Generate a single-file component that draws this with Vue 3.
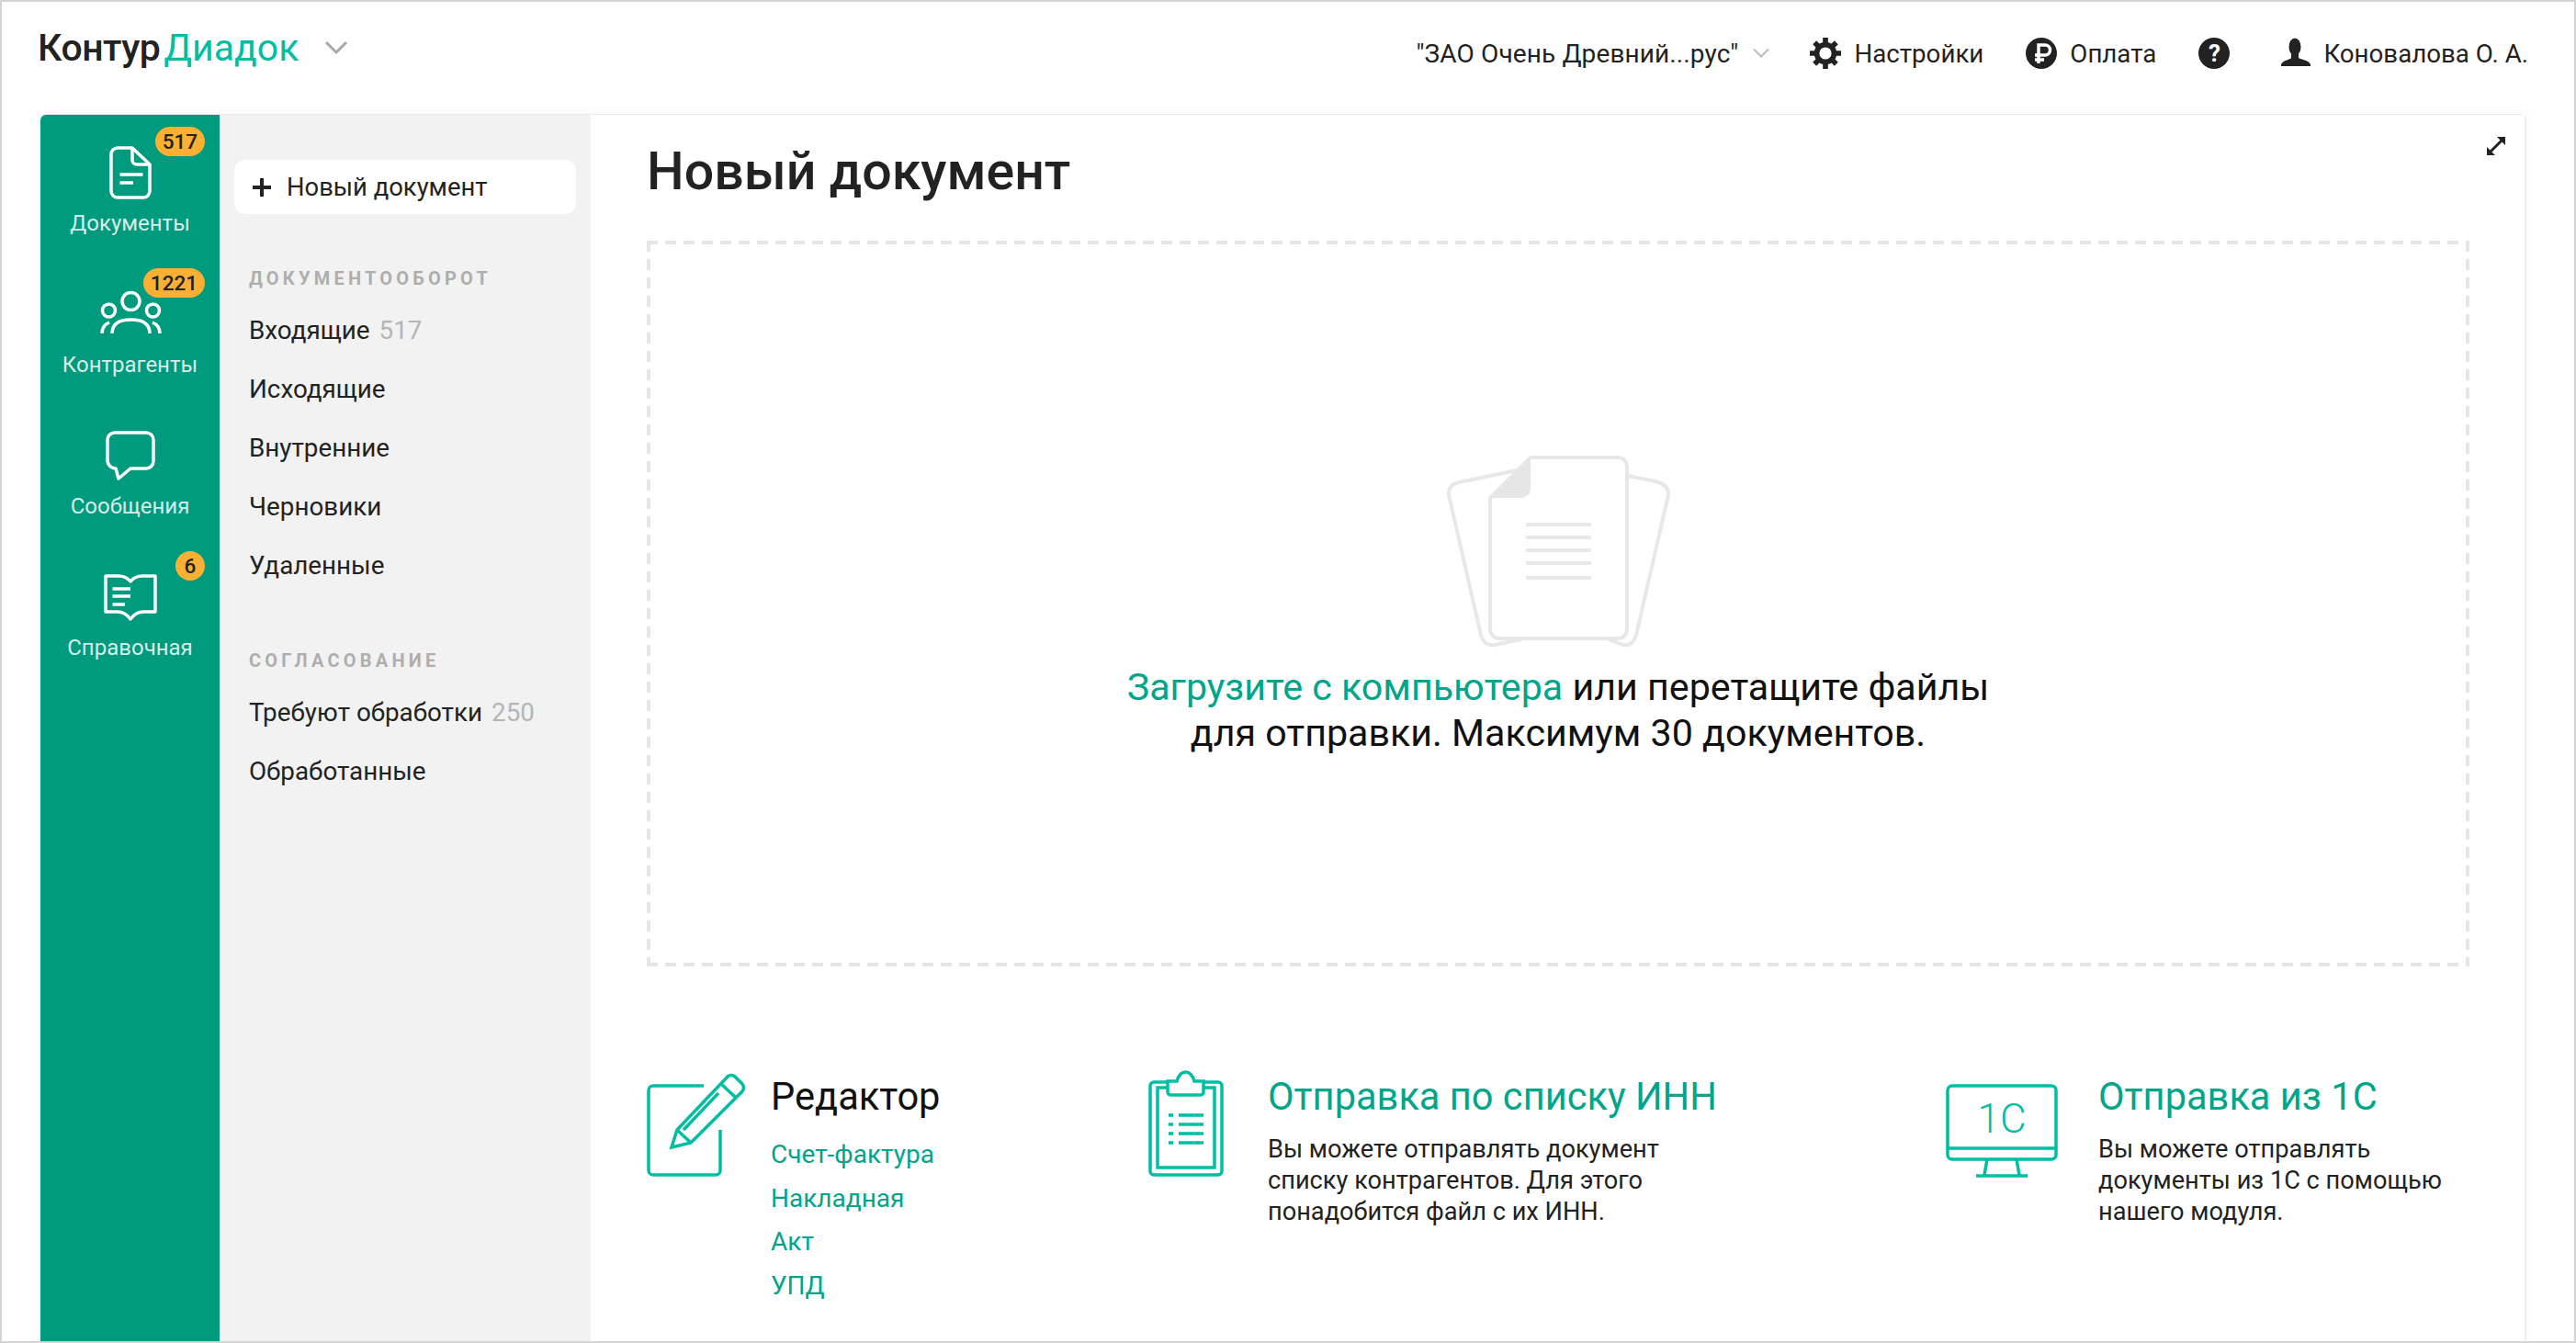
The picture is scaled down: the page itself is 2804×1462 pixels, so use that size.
<template>
  <div class="page">
    <header class="topbar">
      <div class="logo">
        <span class="logo-kontur">Контур</span><span class="logo-product">Диадок</span>
        <svg class="logo-arrow" width="26" height="16" viewBox="0 0 26 16"><path d="M2 2l11 11L24 2" fill="none" stroke="#a8a8a8" stroke-width="3" /></svg>
      </div>
      <nav class="top-menu">
        <span class="top-item company">
          "ЗАО Очень Древний...рус"
          <svg width="18" height="12" viewBox="0 0 18 12"><path d="M1 1.500l8 8 8-8" fill="none" stroke="#bbb" stroke-width="2" /></svg>
        </span>
        <span class="top-item settings">
          <svg width="34" height="34" viewBox="0 0 36 36">
            <g stroke="#222" stroke-width="6">
              <path d="M18 0v36M0 18h36M5.500 5.500l25 25M30.500 5.500l-25 25" />
            </g>
            <circle cx="18" cy="18" r="10" fill="none" stroke="#222" stroke-width="6" />
            <circle cx="18" cy="18" r="7" fill="#fff" />
          </svg>
          Настройки
        </span>
        <span class="top-item pay">
          <svg width="34" height="34" viewBox="0 0 34 34">
            <circle cx="17" cy="17" r="17" fill="#222" />
            <path d="M14 28V8h7a5 5 0 0 1 0 11H10M10 24h10" fill="none" stroke="#fff" stroke-width="3.500" />
          </svg>
          Оплата
        </span>
        <span class="help">?</span>
        <span class="top-item user">
          <svg width="34" height="34" viewBox="0 0 34 34">
            <ellipse cx="17" cy="10" rx="6.500" ry="9.500" fill="#222" />
            <path d="M13 16h8v6c3 2 10 2 13 7v2H2v-2c3-5 10-5 11-7z" fill="#222" />
          </svg>
          Коновалова О. А.
        </span>
      </nav>
    </header>

    <div class="panel">
      <aside class="green-nav">
        <a v-for="item in navItems" :key="item.label" class="nav-item">
          <span v-if="item.badge" class="badge">{{ item.badge }}</span>
          <span class="nav-icon">
            <svg v-if="item.icon === 'doc'" width="60" height="60" viewBox="0 0 60 60" class="line-icon">
              <path d="M32 3H16a7 7 0 0 0-7 7v40a7 7 0 0 0 7 7h28a7 7 0 0 0 7-7V21z" />
              <path d="M32 3v13a5 5 0 0 0 5 5h14M18.500 32h25M18.500 41H33" />
            </svg>
            <svg v-else-if="item.icon === 'people'" width="70" height="60" viewBox="0 0 70 60" class="line-icon">
              <circle cx="35.500" cy="16" r="9.500" />
              <circle cx="11.500" cy="26" r="7" />
              <circle cx="59.500" cy="26" r="7" />
              <path d="M15 51c0-11 9-15 20.500-15S56 40 56 51M4 51c0-6 3-10 8-12M67 51c0-6-3-10-8-12" />
            </svg>
            <svg v-else-if="item.icon === 'chat'" width="60" height="60" viewBox="0 0 60 60" class="line-icon">
              <path d="M13 5h34a8 8 0 0 1 8 8v23a8 8 0 0 1-8 8H30l-13 11-3-11a9 9 0 0 1-9-8V13a8 8 0 0 1 8-8z" />
            </svg>
            <svg v-else width="60" height="60" viewBox="0 0 60 60" class="line-icon">
              <path d="M3 7h14q8 0 13 6 5-6 13-6h14v39H44q-8 0-14 8-6-8-14-8H3z" />
              <path d="M10.500 21H30M10.500 29H30M10.500 38H24" />
            </svg>
          </span>
          <span class="nav-label">{{ item.label }}</span>
        </a>
      </aside>

      <aside class="side-menu">
        <button class="new-doc"><span class="plus"></span>Новый документ</button>
        <div v-for="group in menuGroups" :key="group.title" class="menu-group">
          <div class="menu-title">{{ group.title }}</div>
          <a v-for="row in group.rows" :key="row.name" class="menu-row">
            {{ row.name }}<span v-if="row.count" class="menu-count">{{ row.count }}</span>
          </a>
        </div>
      </aside>

      <main class="content">
        <svg class="expand" width="24" height="24" viewBox="0 0 24 24">
          <path d="M5 19L19 5" stroke="#222" stroke-width="3" />
          <path d="M13 2h9v9zM2 13v9h9z" fill="#222" />
        </svg>
        <h1>Новый документ</h1>

        <section class="dropzone">
          <svg width="245" height="210" viewBox="0 0 245 210" class="sheets">
            <path d="M82 16L14 30q-12 3-11 14l34 148q3 17 16 15l29-6M198 23l30 6q15 4 14 15L208 192q-3 17-15 15l-16-6" />
            <path d="M92 3h95a10 10 0 0 1 10 10v177a10 10 0 0 1-10 10H58a10 10 0 0 1-10-10V47z" />
            <path d="M92 3v34a10 10 0 0 1-10 10H48z" class="fold" />
            <path d="M87 76h71M87 90h71M87 104h71M87 118h71M87 134h71" />
          </svg>
          <p class="drop-text"><a>Загрузите с компьютера</a> или перетащите файлы<br>для отправки. Максимум 30 документов.</p>
        </section>

        <section class="features">
          <div class="feature feature-editor">
            <svg width="110" height="120" viewBox="0 0 110 120" class="teal-icon">
              <path d="M62 20H7a5 5 0 0 0-5 5v87a5 5 0 0 0 5 5h68a5 5 0 0 0 5-5V68" />
              <path d="M27 87l6-19 55-58q4-3 8 0l8 8q3 4 0 8L48 82zM33 68l15 14M80 17l17 16M40 68l38-40" />
            </svg>
            <div>
              <div class="feature-title dark">Редактор</div>
              <a v-for="link in editorLinks" :key="link" class="feature-link">{{ link }}</a>
            </div>
          </div>
          <div class="feature feature-inn">
            <svg width="82" height="120" viewBox="0 0 82 120" class="teal-icon">
              <path d="M21 16H6a4 4 0 0 0-4 4v93a4 4 0 0 0 4 4h70a4 4 0 0 0 4-4V20a4 4 0 0 0-4-4H60" />
              <path d="M21 22H10v87h62V22H60" />
              <path d="M21 15h10q3-10 9.500-10T50 15h10v12a3 3 0 0 1-3 3H24a3 3 0 0 1-3-3z" />
              <path d="M22 52h5M33 52h27M22 62h5M33 62h27M22 72h5M33 72h27M22 82h5M33 82h27" />
            </svg>
            <div>
              <div class="feature-title">Отправка по списку ИНН</div>
              <p class="feature-text">Вы можете отправлять документ<br>списку контрагентов. Для этого<br>понадобится файл с их ИНН.</p>
            </div>
          </div>
          <div class="feature feature-1c">
            <svg width="122" height="120" viewBox="0 0 122 120" class="teal-icon">
              <rect x="2" y="20" width="118" height="80" rx="5" />
              <path d="M2 88h118M45 100l-3 17M77 100l3 17M33 118h56" />
              <text x="61" y="71" text-anchor="middle" class="icon-text">1C</text>
            </svg>
            <div>
              <div class="feature-title">Отправка из 1С</div>
              <p class="feature-text">Вы можете отправлять<br>документы из 1С с помощью<br>нашего модуля.</p>
            </div>
          </div>
        </section>
      </main>
    </div>
  </div>
</template>

<script setup>
const navItems = [
  { label: 'Документы', icon: 'doc', badge: '517' },
  { label: 'Контрагенты', icon: 'people', badge: '1221' },
  { label: 'Сообщения', icon: 'chat' },
  { label: 'Справочная', icon: 'book', badge: '6' }
]

const menuGroups = [
  {
    title: 'Документооборот',
    rows: [
      { name: 'Входящие', count: '517' },
      { name: 'Исходящие' },
      { name: 'Внутренние' },
      { name: 'Черновики' },
      { name: 'Удаленные' }
    ]
  },
  {
    title: 'Согласование',
    rows: [
      { name: 'Требуют обработки', count: '250' },
      { name: 'Обработанные' }
    ]
  }
]

const editorLinks = ['Счет-фактура', 'Накладная', 'Акт', 'УПД']
</script>

<style>
html, body {
  margin: 0;
  background: #fff;
}
</style>

<style scoped>
.page {
  box-sizing: border-box;
  width: 2804px;
  height: 1462px;
  border: 2px solid #d4d4d4;
  overflow: hidden;
  font-family: Roboto, "Noto Sans", sans-serif;
  color: #222;
  background: #fff;
}

.topbar {
  height: 122px;
  padding: 0 50px 0 39px;
  display: flex;
  justify-content: space-between;
  align-items: flex-start;
}

.logo {
  display: flex;
  align-items: center;
  height: 100px;
  font-size: 41px;
}

.logo-kontur {
  font-weight: 500;
  letter-spacing: -0.5px;
}

.logo-product {
  margin-left: 4px;
  color: #00bea2;
}

.logo-arrow {
  margin-left: 28px;
}

.top-menu {
  display: flex;
  align-items: center;
  height: 112px;
  font-size: 27.700px;
}

.top-item {
  display: flex;
  align-items: center;
  gap: 14px;
}

.company {
  gap: 16px;
  margin-right: 44px;
  font-size: 28px;
  letter-spacing: 0.120px;
}

.settings {
  margin-right: 46px;
}

.pay {
  margin-right: 46px;
}

.help {
  width: 34px;
  height: 34px;
  border-radius: 50%;
  background: #222;
  color: #fff;
  font-size: 26px;
  font-weight: 700;
  line-height: 34px;
  text-align: center;
  margin-right: 54px;
}

.panel {
  display: flex;
  height: 1400px;
  margin: 0 52px 0 42px;
  border-top: 1px solid #e8e8e8;
  border-right: 2px solid #eee;
  border-radius: 6px 6px 0 0;
  box-shadow: 0 0 16px rgba(0, 0, 0, 0.03);
}

.green-nav {
  flex: 0 0 195px;
  background: #009a7e;
  border-top-left-radius: 6px;
}

.nav-item {
  position: relative;
  box-sizing: border-box;
  height: 154px;
  padding-top: 33px;
  display: flex;
  flex-direction: column;
  align-items: center;
}

.nav-icon {
  height: 60px;
  display: flex;
  justify-content: center;
}

.line-icon {
  fill: none;
  stroke: #fff;
  stroke-width: 3.500;
  stroke-linejoin: round;
}

.nav-label {
  margin-top: 10px;
  font-size: 24px;
  line-height: 30px;
  color: rgba(255, 255, 255, 0.85);
}

.badge {
  position: absolute;
  top: 13px;
  right: 16px;
  min-width: 32px;
  height: 32px;
  padding: 0 8px;
  box-sizing: border-box;
  border-radius: 16px;
  background: #fbb034;
  color: #222;
  font-size: 22.500px;
  font-weight: 500;
  line-height: 32px;
  text-align: center;
}

.side-menu {
  box-sizing: border-box;
  flex: 0 0 404px;
  padding: 49px 16px 0;
  background: #f2f2f2;
}

.new-doc {
  display: flex;
  align-items: center;
  width: 372px;
  height: 59px;
  padding: 0 0 0 20px;
  margin-bottom: 58px;
  border: 0;
  border-radius: 12px;
  background: #fff;
  color: #222;
  font: inherit;
  font-size: 27.400px;
}

.plus {
  width: 20px;
  height: 20px;
  margin-right: 17px;
  background:
    linear-gradient(#222, #222) center / 100% 4px no-repeat,
    linear-gradient(#222, #222) center / 4px 100% no-repeat;
}

.menu-group {
  margin-bottom: 59px;
}

.menu-title {
  margin: 0 0 13px 0;
  padding-left: 16px;
  font-size: 20px;
  font-weight: 700;
  line-height: 24px;
  letter-spacing: 4.200px;
  text-transform: uppercase;
  color: #aeaeae;
}

.menu-row {
  display: block;
  height: 64px;
  padding-left: 16px;
  font-size: 27.800px;
  line-height: 64px;
}

.menu-count {
  margin-left: 10px;
  color: #b5b5b5;
}

.content {
  position: relative;
  box-sizing: border-box;
  flex: 1;
  padding: 30px 60px 0 61px;
  background: #fff;
}

.expand {
  position: absolute;
  top: 22px;
  right: 19px;
}

h1 {
  margin: 0 0 43px;
  font-size: 57.300px;
  font-weight: 500;
  line-height: 64px;
}

/* dash 12 / gap 8, a css dashed border comes out too short */
.dropzone {
  box-sizing: border-box;
  height: 790px;
  padding-top: 233px;
  text-align: center;
  background:
    repeating-linear-gradient(90deg, #e6e6e6 0 12px, transparent 12px 20px) top / 100% 4px no-repeat,
    repeating-linear-gradient(90deg, #e6e6e6 0 12px, transparent 12px 20px) bottom / 100% 4px no-repeat,
    repeating-linear-gradient(180deg, #e6e6e6 0 12px, transparent 12px 20px) left / 4px 100% no-repeat,
    repeating-linear-gradient(180deg, #e6e6e6 0 12px, transparent 12px 20px) right / 4px 100% no-repeat;
}

.sheets {
  display: block;
  margin: 0 auto;
  fill: none;
  stroke: #e8e8e8;
  stroke-width: 4;
}

.sheets .fold {
  fill: #e6e6e6;
  stroke: none;
}

.drop-text {
  margin: 18px 0 0;
  font-size: 41.200px;
  line-height: 50px;
  color: #111;
}

.drop-text a,
.feature-title {
  color: #00a58a;
}

.features {
  display: flex;
  margin-top: 117px;
}

.feature {
  display: flex;
  align-items: flex-start;
}

.feature > svg {
  margin-top: -7px;
  flex: none;
}

.feature-editor {
  width: 546px;
  gap: 25px;
}

.feature-inn {
  width: 868px;
  gap: 48px;
}

.feature-1c {
  flex: 1;
  gap: 44px;
}

.teal-icon {
  fill: none;
  stroke: #00bea2;
  stroke-width: 3.500;
}

.icon-text {
  font-size: 44px;
  font-weight: 300;
  fill: #00bea2;
  stroke: none;
}

.feature-title {
  font-size: 41.600px;
  line-height: 50px;
}

.feature-title.dark {
  color: #111;
}

.feature-link {
  display: block;
  font-size: 28px;
  line-height: 47.500px;
  color: #00a58a;
}

.feature-link:first-of-type {
  margin-top: 14px;
}

.feature-text {
  margin: 15px 0 0;
  font-size: 27.200px;
  line-height: 34px;
  color: #222;
}
</style>
